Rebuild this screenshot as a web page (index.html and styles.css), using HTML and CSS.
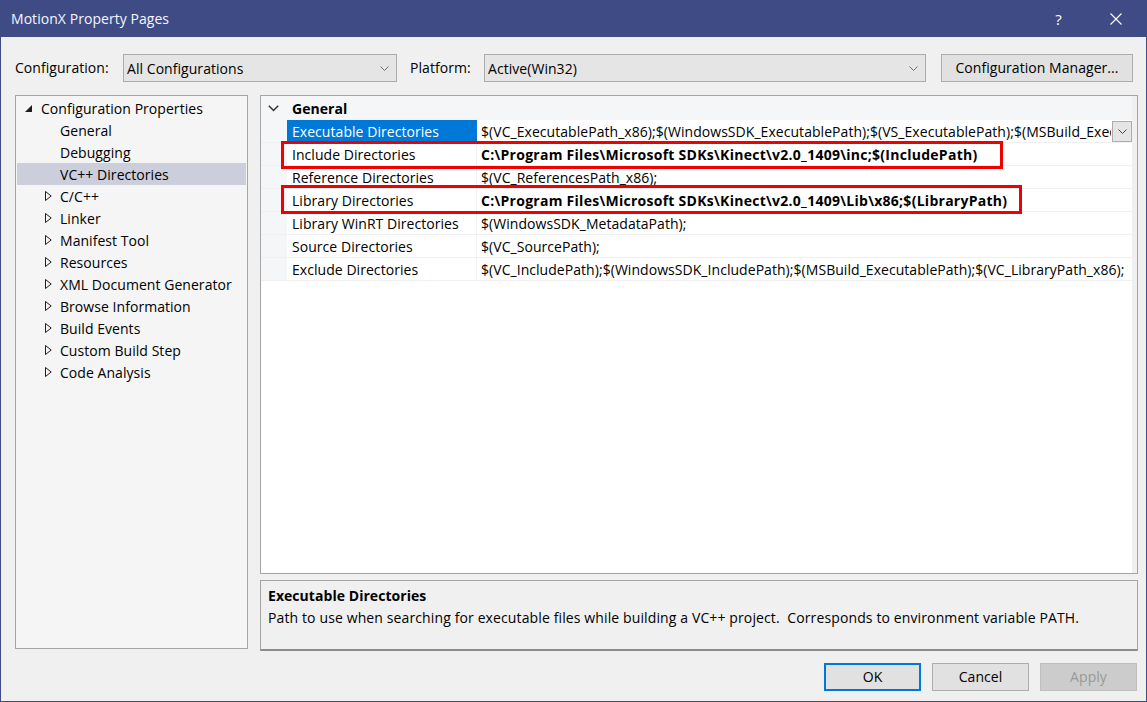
FILE: index.html
```html
<!DOCTYPE html>
<html lang="en">
<head>
<meta charset="utf-8">
<title>MotionX Property Pages</title>
<link rel="stylesheet" href="styles.css">
</head>
<body>
<div class="window">
  <div class="titlebar">
    <span class="title">MotionX Property Pages</span>
    <span class="tb-btn tb-help">?</span>
    <span class="tb-btn tb-close">
      <svg width="12" height="12" viewBox="0 0 12 12"><path d="M0.5 0.5 L11.5 11.5 M11.5 0.5 L0.5 11.5" stroke="#ffffff" stroke-width="1.1" fill="none"/></svg>
    </span>
  </div>
  <div class="content">
    <div class="config-row">
      <span class="lbl lbl-config">Configuration:</span>
      <div class="combo combo-config">
        <span>All Configurations</span>
        <svg class="chev" width="9" height="5" viewBox="0 0 9 5"><polyline points="0.5,0.5 4.5,4.5 8.5,0.5" fill="none" stroke="#707070" stroke-width="1"/></svg>
      </div>
      <span class="lbl lbl-platform">Platform:</span>
      <div class="combo combo-platform">
        <span>Active(Win32)</span>
        <svg class="chev" width="9" height="5" viewBox="0 0 9 5"><polyline points="0.5,0.5 4.5,4.5 8.5,0.5" fill="none" stroke="#707070" stroke-width="1"/></svg>
      </div>
      <button class="btn btn-cfg">Configuration Manager...</button>
    </div>

    <div class="main">
      <div class="tree">
        <div class="tree-row lvl0">
          <svg class="ico-exp" width="8" height="8" viewBox="0 0 8 8"><polygon points="7,0 7,7 0,7" fill="#1e1e1e"/></svg>
          <span>Configuration Properties</span>
        </div>
        <div class="tree-row leaf">General</div>
        <div class="tree-row leaf">Debugging</div>
        <div class="tree-row leaf selected">VC++ Directories</div>
        <div class="tree-row coll"><svg class="ico-col" width="7" height="10" viewBox="0 0 7 10"><polygon points="0.5,0.5 6.2,5 0.5,9.5" fill="none" stroke="#1e1e1e" stroke-width="1"/></svg><span>C/C++</span></div>
        <div class="tree-row coll"><svg class="ico-col" width="7" height="10" viewBox="0 0 7 10"><polygon points="0.5,0.5 6.2,5 0.5,9.5" fill="none" stroke="#1e1e1e" stroke-width="1"/></svg><span>Linker</span></div>
        <div class="tree-row coll"><svg class="ico-col" width="7" height="10" viewBox="0 0 7 10"><polygon points="0.5,0.5 6.2,5 0.5,9.5" fill="none" stroke="#1e1e1e" stroke-width="1"/></svg><span>Manifest Tool</span></div>
        <div class="tree-row coll"><svg class="ico-col" width="7" height="10" viewBox="0 0 7 10"><polygon points="0.5,0.5 6.2,5 0.5,9.5" fill="none" stroke="#1e1e1e" stroke-width="1"/></svg><span>Resources</span></div>
        <div class="tree-row coll"><svg class="ico-col" width="7" height="10" viewBox="0 0 7 10"><polygon points="0.5,0.5 6.2,5 0.5,9.5" fill="none" stroke="#1e1e1e" stroke-width="1"/></svg><span>XML Document Generator</span></div>
        <div class="tree-row coll"><svg class="ico-col" width="7" height="10" viewBox="0 0 7 10"><polygon points="0.5,0.5 6.2,5 0.5,9.5" fill="none" stroke="#1e1e1e" stroke-width="1"/></svg><span>Browse Information</span></div>
        <div class="tree-row coll"><svg class="ico-col" width="7" height="10" viewBox="0 0 7 10"><polygon points="0.5,0.5 6.2,5 0.5,9.5" fill="none" stroke="#1e1e1e" stroke-width="1"/></svg><span>Build Events</span></div>
        <div class="tree-row coll"><svg class="ico-col" width="7" height="10" viewBox="0 0 7 10"><polygon points="0.5,0.5 6.2,5 0.5,9.5" fill="none" stroke="#1e1e1e" stroke-width="1"/></svg><span>Custom Build Step</span></div>
        <div class="tree-row coll"><svg class="ico-col" width="7" height="10" viewBox="0 0 7 10"><polygon points="0.5,0.5 6.2,5 0.5,9.5" fill="none" stroke="#1e1e1e" stroke-width="1"/></svg><span>Code Analysis</span></div>
      </div>

      <div class="right-col">
        <div class="grid">
          <div class="grid-head">
            <div class="gutter">
              <svg width="11" height="7" viewBox="0 0 11 7"><polyline points="0.8,0.8 5.5,5.5 10.2,0.8" fill="none" stroke="#333" stroke-width="1.5"/></svg>
            </div>
            <div class="head-text">General</div>
          </div>
          <div class="grid-row">
            <div class="gutter"></div>
            <div class="name sel">Executable Directories</div>
            <div class="value">
              <span class="vtext">$(VC_ExecutablePath_x86);$(WindowsSDK_ExecutablePath);$(VS_ExecutablePath);$(MSBuild_ExecutablePath);$(FxCopDir);$(PATH);</span>
              <span class="drop">
                <svg width="9" height="5" viewBox="0 0 9 5"><polyline points="0.5,0.5 4.5,4.5 8.5,0.5" fill="none" stroke="#444" stroke-width="1"/></svg>
              </span>
            </div>
          </div>
          <div class="grid-row">
            <div class="gutter"></div>
            <div class="name">Include Directories</div>
            <div class="value bold"><span class="vtext">C:\Program Files\Microsoft SDKs\Kinect\v2.0_1409\inc;$(IncludePath)</span></div>
          </div>
          <div class="grid-row">
            <div class="gutter"></div>
            <div class="name">Reference Directories</div>
            <div class="value"><span class="vtext">$(VC_ReferencesPath_x86);</span></div>
          </div>
          <div class="grid-row">
            <div class="gutter"></div>
            <div class="name">Library Directories</div>
            <div class="value bold"><span class="vtext">C:\Program Files\Microsoft SDKs\Kinect\v2.0_1409\Lib\x86;$(LibraryPath)</span></div>
          </div>
          <div class="grid-row">
            <div class="gutter"></div>
            <div class="name">Library WinRT Directories</div>
            <div class="value"><span class="vtext">$(WindowsSDK_MetadataPath);</span></div>
          </div>
          <div class="grid-row">
            <div class="gutter"></div>
            <div class="name">Source Directories</div>
            <div class="value"><span class="vtext">$(VC_SourcePath);</span></div>
          </div>
          <div class="grid-row">
            <div class="gutter"></div>
            <div class="name">Exclude Directories</div>
            <div class="value"><span class="vtext">$(VC_IncludePath);$(WindowsSDK_IncludePath);$(MSBuild_ExecutablePath);$(VC_LibraryPath_x86);</span></div>
          </div>

          <div class="mark mark-include"></div>
          <div class="mark mark-library"></div>
        </div>

        <div class="desc">
          <div class="desc-title">Executable Directories</div>
          <div class="desc-text">Path to use when searching for executable files while building a VC++ project.&nbsp; Corresponds to environment variable PATH.</div>
        </div>
      </div>
    </div>

    <div class="footer">
      <button class="btn btn-ok">OK</button>
      <button class="btn">Cancel</button>
      <button class="btn btn-disabled">Apply</button>
    </div>
  </div>
</div>
</body>
</html>
```

FILE: styles.css
```css
* {
  box-sizing: border-box;
}

html, body {
  margin: 0;
  padding: 0;
}

body {
  width: 1147px;
  height: 702px;
  overflow: hidden;
  font-family: "Open Sans", "Noto Sans", "DejaVu Sans", sans-serif;
  font-size: 14px;
  letter-spacing: 0.05px;
  color: #000;
  background: #f0f0f0;
}

.window {
  width: 1147px;
  height: 702px;
  display: flex;
  flex-direction: column;
  background: #f0f0f0;
}

/* ---------- title bar ---------- */
.titlebar {
  height: 37px;
  flex: none;
  background: #3f4b85;
  color: #ffffff;
  display: flex;
  align-items: center;
  padding-left: 11px;
}

.title {
  flex: 1;
  font-size: 14px;
  line-height: 20px;
  padding-top: 1px;
  color: #f4f6ff;
}

.tb-btn {
  width: 46px;
  height: 37px;
  display: flex;
  align-items: center;
  justify-content: center;
  color: #ffffff;
  font-size: 15px;
}

.tb-help {
  margin-right: 12px;
  padding-left: 1px;
}

.tb-close {
  margin-right: 8px;
}

/* ---------- content ---------- */
.content {
  flex: 1;
  border: 1px solid #3f4b85;
  border-top: 0;
  padding: 17px 7px 0 14px;
  display: flex;
  flex-direction: column;
}

.config-row {
  display: flex;
  align-items: center;
  height: 28px;
}

.lbl {
  line-height: 20px;
}

.lbl-config {
  width: 108px;
}

.lbl-platform {
  margin-left: 13px;
  width: 74px;
}

.combo {
  height: 28px;
  border: 1px solid #acacac;
  background: #e5e5e5;
  display: flex;
  align-items: center;
  justify-content: space-between;
  padding: 0 7px 0 3px;
}

.combo-config {
  width: 274px;
}

.combo-platform {
  width: 442px;
}

.chev {
  display: block;
}

.btn {
  font-family: inherit;
  font-size: 14px;
  letter-spacing: 0.05px;
  color: #000;
  height: 28px;
  width: 97px;
  border: 1px solid #adadad;
  background: #e1e1e1;
  padding: 0;
  margin: 0;
  line-height: 20px;
}

.btn-cfg {
  margin-left: 15px;
  width: 192px;
}

/* ---------- main area ---------- */
.main {
  display: flex;
  margin-top: 13px;
  height: 556px;
}

.tree {
  width: 233px;
  height: 554px;
  border: 1px solid #a5a5a5;
  background: #f5f5f5;
  padding: 1px;
}

.tree-row {
  height: 22px;
  display: flex;
  align-items: center;
  padding-top: 2px;
  line-height: 20px;
  white-space: nowrap;
}

.tree-row.lvl0 {
  padding-left: 8px;
}

.ico-exp {
  margin-top: -1px;
  margin-right: 8px;
  flex: none;
}

.tree-row.leaf {
  padding-left: 43px;
}

.tree-row.coll {
  padding-left: 28px;
}

.ico-col {
  margin-top: -2px;
  margin-right: 8px;
  flex: none;
}

.tree-row.selected {
  background: #cccedb;
}

.right-col {
  margin-left: 12px;
  width: 878px;
  display: flex;
  flex-direction: column;
}

/* ---------- property grid ---------- */
.grid {
  position: relative;
  height: 479px;
  border: 1px solid #a5a5a5;
  padding-right: 5px;
  background: linear-gradient(to left, #f0f0f0 5px, #ffffff 5px);
  overflow: hidden;
}

.grid-head {
  height: 24px;
  display: flex;
  align-items: center;
  background: #f5f6f8;
}

.gutter {
  width: 26px;
  flex: none;
  align-self: stretch;
  background: #f5f6f8;
  display: flex;
  align-items: center;
  padding-left: 7px;
}

.head-text {
  font-weight: bold;
  padding-left: 5px;
  padding-top: 2px;
  line-height: 20px;
}

.grid-row {
  height: 23px;
  display: flex;
  border-bottom: 1px solid #f0f0f0;
}

.name {
  width: 190px;
  flex: none;
  padding-left: 5px;
  padding-top: 2px;
  line-height: 20px;
  border-right: 1px solid #f0f0f0;
  white-space: nowrap;
  overflow: hidden;
}

.name.sel {
  background: #0078d7;
  color: #ffffff;
  border-right-color: #0078d7;
}

.value {
  flex: 1;
  min-width: 0;
  display: flex;
  align-items: center;
  padding-left: 4px;
  line-height: 20px;
  white-space: nowrap;
}

.vtext {
  flex: 1;
  min-width: 0;
  overflow: hidden;
  padding-top: 2px;
}

.value.bold {
  font-weight: bold;
  letter-spacing: 0.27px;
}

.drop {
  flex: none;
  width: 20px;
  height: 21px;
  margin-left: 1px;
  border: 1px solid #adadad;
  background: #e5e5e5;
  display: flex;
  align-items: center;
  justify-content: center;
}

.mark {
  position: absolute;
  border: 3px solid #f00000;
  pointer-events: none;
}

.mark-include {
  left: 20px;
  top: 45px;
  width: 722px;
  height: 28px;
}

.mark-library {
  left: 20px;
  top: 89px;
  width: 741px;
  height: 29px;
}

/* ---------- description ---------- */
.desc {
  margin-top: 6px;
  height: 71px;
  border: 1px solid #a5a5a5;
  border-bottom: 2px solid #8c8c8c;
  background: #f0f0f0;
  padding: 4px 7px 0 7px;
}

.desc-title {
  font-weight: bold;
  line-height: 22px;
}

.desc-text {
  line-height: 22px;
  letter-spacing: 0.12px;
  white-space: nowrap;
}

/* ---------- footer ---------- */
.footer {
  display: flex;
  justify-content: flex-end;
  gap: 11px;
  margin-top: 12px;
  padding-right: 2px;
}

.btn-ok {
  border: 2px solid #0078d7;
}

.btn-disabled {
  background: #cccccc;
  border-color: #bfbfbf;
  color: #9a9a9a;
}
```
